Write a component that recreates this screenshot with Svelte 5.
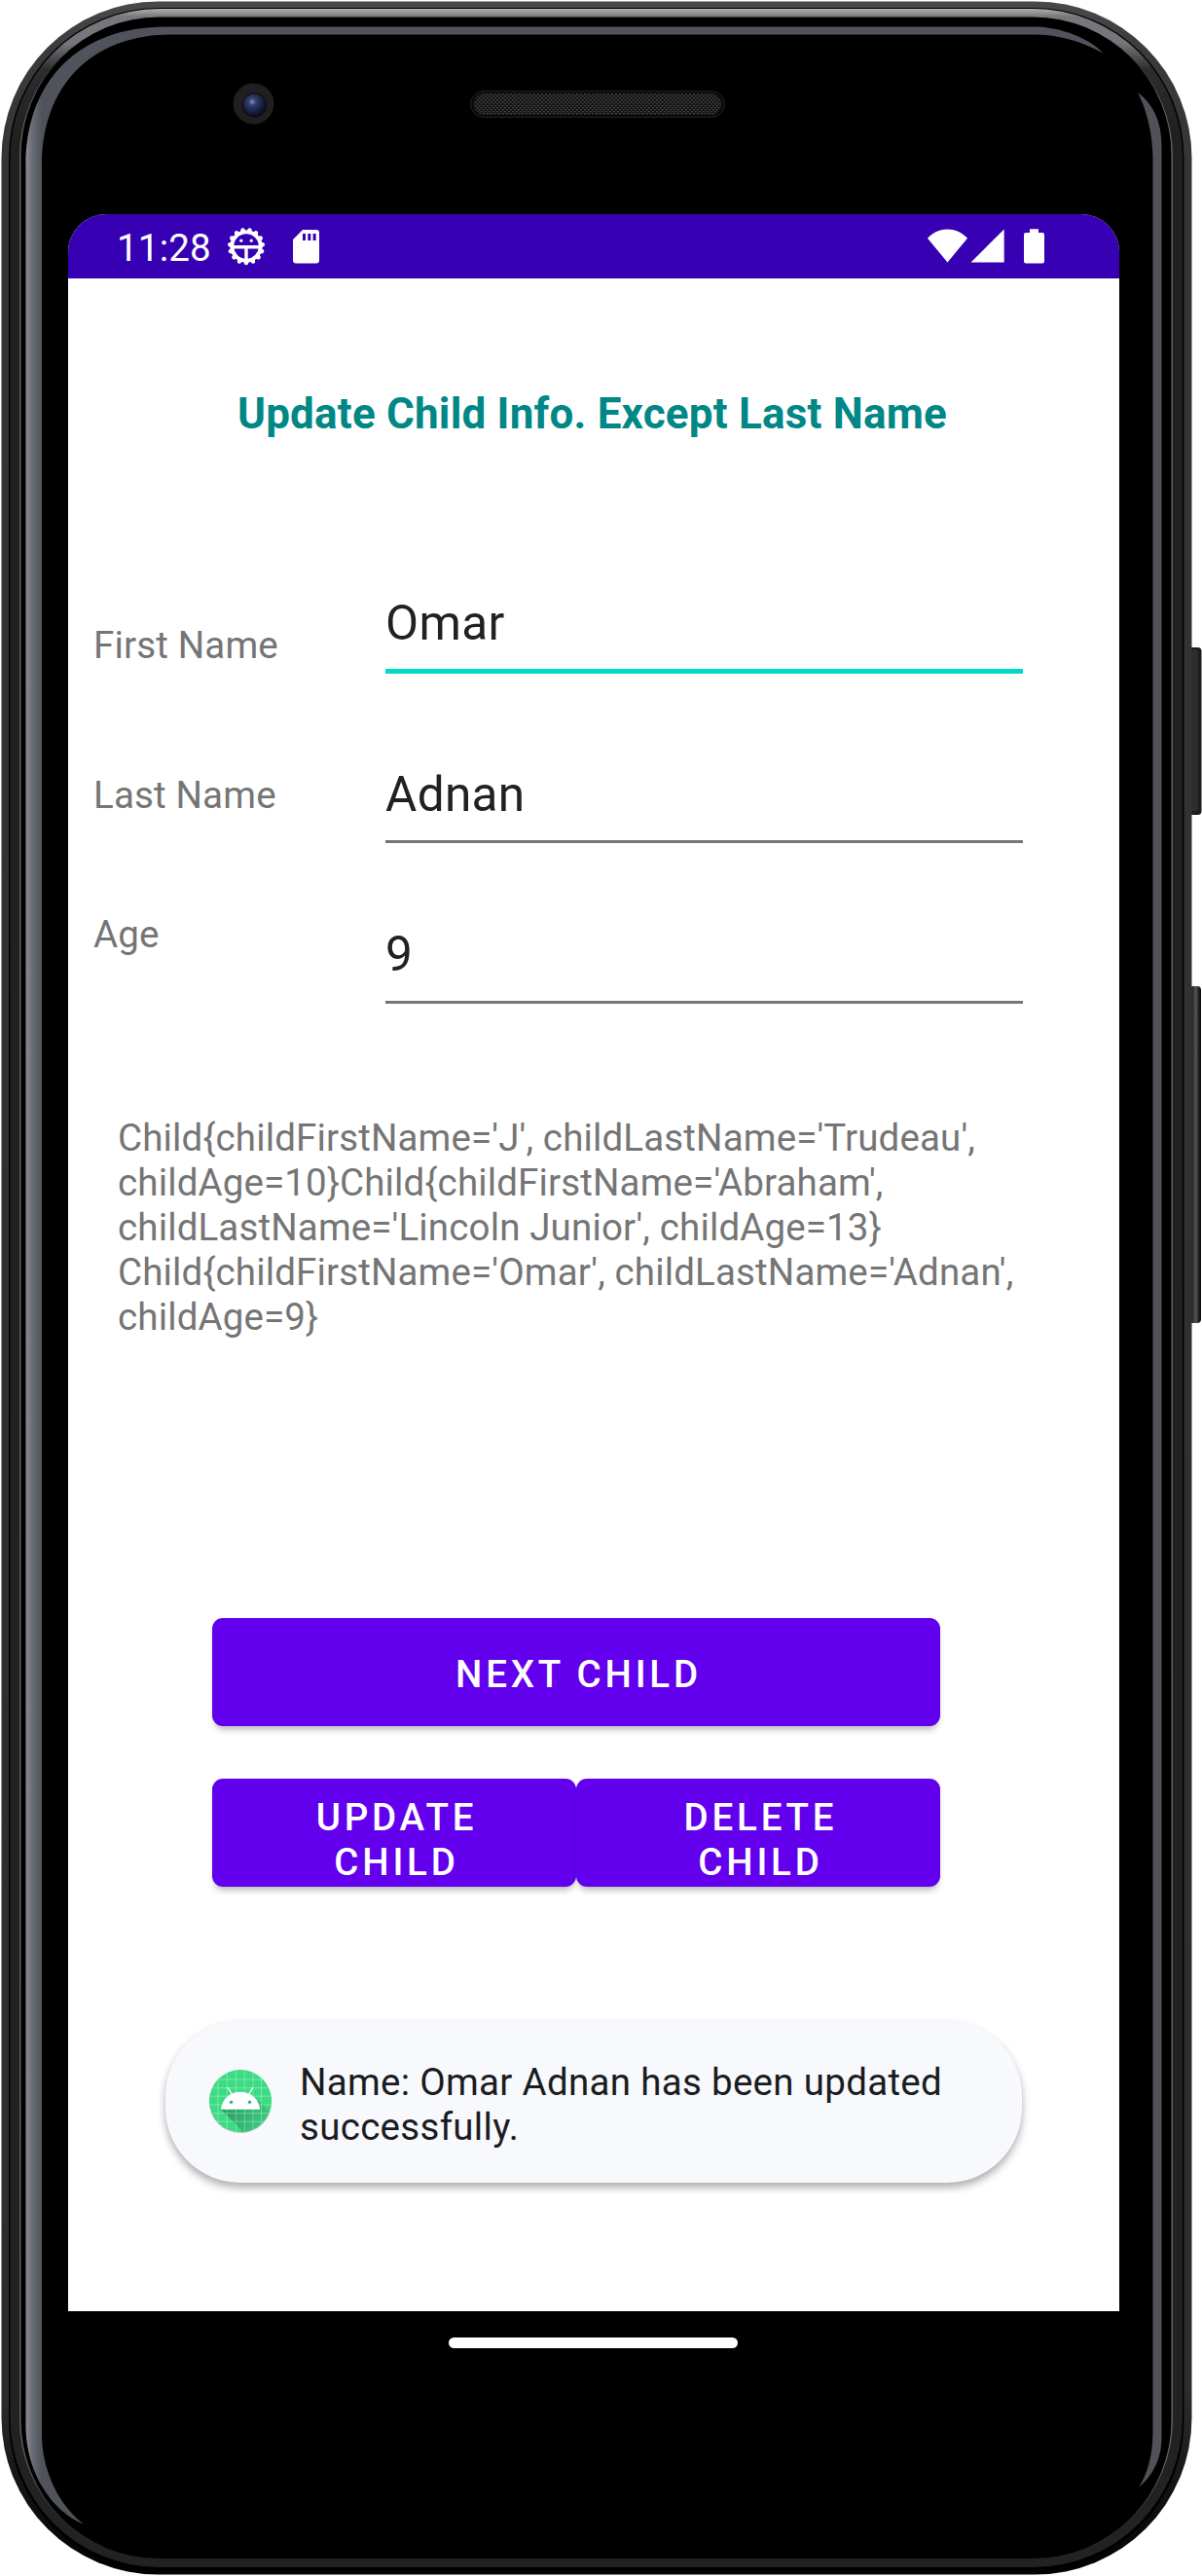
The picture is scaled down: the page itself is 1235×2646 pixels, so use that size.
<script>
  const fields = [
    { id: 'first', label: 'First Name', value: 'Omar', active: true },
    { id: 'last', label: 'Last Name', value: 'Adnan', active: false },
    { id: 'age', label: 'Age', value: '9', active: false },
  ];
  const summary = [
    "Child{childFirstName='J', childLastName='Trudeau',",
    "childAge=10}Child{childFirstName='Abraham',",
    "childLastName='Lincoln Junior', childAge=13}",
    "Child{childFirstName='Omar', childLastName='Adnan',",
    'childAge=9}',
  ];
  const gridX = [9, 18.3, 27.6, 36.3, 45, 53.5];
  const gridY = [10, 18.7, 27.2, 36, 44.7, 53.2];
  const teeth = Array.from({ length: 15 }, (_, i) => i * 24 + 12);
</script>

<div class="device">
  <svg class="shell" viewBox="0 0 1235 2646" width="1235" height="2646" aria-hidden="true">
    <defs>
      <linearGradient id="outer" x1="0" y1="0" x2="0" y2="2646" gradientUnits="userSpaceOnUse">
        <stop offset="0" stop-color="#4a4a4a" /><stop offset=".02" stop-color="#3c3a3a" />
        <stop offset=".06" stop-color="#373435" /><stop offset=".93" stop-color="#2e2b2c" />
        <stop offset=".97" stop-color="#111" /><stop offset="1" stop-color="#000" />
      </linearGradient>
      <linearGradient id="band" x1="0" y1="8" x2="0" y2="2638" gradientUnits="userSpaceOnUse">
        <stop offset="0" stop-color="#b4b5b8" /><stop offset=".0035" stop-color="#77787c" />
        <stop offset=".014" stop-color="#74767b" /><stop offset=".024" stop-color="#2c2d2f" />
        <stop offset=".05" stop-color="#202020" /><stop offset="1" stop-color="#222" />
      </linearGradient>
      <linearGradient id="rim" x1="0" y1="17" x2="0" y2="2628" gradientUnits="userSpaceOnUse">
        <stop offset="0" stop-color="#222" /><stop offset=".03" stop-color="#606162" />
        <stop offset=".96" stop-color="#606162" /><stop offset="1" stop-color="#222" />
      </linearGradient>
      <linearGradient id="leftRing" x1="26" x2="43" y1="0" y2="0" gradientUnits="userSpaceOnUse">
        <stop offset="0" stop-color="#8e9092" /><stop offset=".4" stop-color="#6a6e75" /><stop offset="1" stop-color="#50535b" />
      </linearGradient>
      <linearGradient id="side" x1="0" x2="1" y1="0" y2="0">
        <stop offset="0" stop-color="#111" /><stop offset=".35" stop-color="#2e2e2e" />
        <stop offset=".6" stop-color="#555" /><stop offset=".8" stop-color="#222" /><stop offset="1" stop-color="#080808" />
      </linearGradient>
      <radialGradient id="lens" cx=".4" cy=".35" r=".65">
        <stop offset="0" stop-color="#8590b8" /><stop offset=".25" stop-color="#34406e" />
        <stop offset=".65" stop-color="#1a2348" /><stop offset="1" stop-color="#0b0e1c" />
      </radialGradient>
      <pattern id="mesh" width="4" height="4" patternUnits="userSpaceOnUse">
        <rect width="4" height="4" fill="#131313" />
        <rect width="1.6" height="1.4" fill="#484a48" /><rect x="2" y="2" width="1.6" height="1.4" fill="#484a48" />
      </pattern>
    </defs>
    <rect x="1221" y="665" width="13.5" height="172" rx="4" fill="#1c1c1c" />
    <rect x="1223" y="667" width="8" height="166" rx="3" fill="#2d2d2d" />
    <rect x="1221" y="1013" width="13" height="346" rx="4" fill="url(#side)" />
    <rect x="1.5" y="1.5" width="1223" height="2643" rx="161" fill="url(#outer)" />
    <rect x="9" y="8" width="1207.5" height="2632" rx="154" fill="#000" />
    <rect x="10.5" y="9" width="1204.5" height="2628" rx="153" fill="url(#band)" />
    <rect x="20" y="18" width="1185" height="2610" rx="143" fill="url(#rim)" />
    <rect x="21.5" y="17.5" width="1182" height="2610.5" rx="142" fill="#000" />
    <path fill="url(#leftRing)" d="M26.5 170C26.5 82 82 27.500 170 27.500H1067C1090 29 1118 38 1134 55C1113 43 1088 35.500 1062 35.500H176C94 35.500 43 88 43 170V2504C44 2535 57 2570 86 2593C49 2577 26.500 2535 26.500 2492Z" />
    <path fill="#515258" d="M1169 95C1186 108 1193.500 126 1193.500 150V2505C1193 2527 1184 2543 1170 2555C1181 2537 1184.500 2519 1184.500 2495V165C1184.500 137 1178 113 1169 95Z" />
    <rect x="483.500" y="93.500" width="261" height="27" rx="13.500" fill="#0a0a0c" stroke="#222226" />
    <rect x="487" y="96" width="254" height="22" rx="11" fill="url(#mesh)" />
    <circle cx="260.500" cy="106.500" r="21" fill="#1f1f20" />
    <circle cx="261.500" cy="108" r="12.500" fill="#0b0b10" />
    <circle cx="261.500" cy="108" r="11.500" fill="url(#lens)" />
  </svg>

  <main class="screen">
    <header class="status">
      <span class="clock">11:28</span>
      <svg class="gear" viewBox="-20 -20 40 40" width="40" height="40">
        <circle r="14.700" fill="none" stroke="#fff" stroke-width="3.800" />
        {#each teeth as angle}
          <path d="M-2.900 -15.500L-1.700 -18.500Q0 -20 1.700 -18.500L2.900 -15.500Z" fill="#fff" transform="rotate({angle})" />
        {/each}
        <path d="M-13 .800H13M0 1V15" stroke="#fff" stroke-width="3.400" />
        <circle cx="-5.200" cy="-5.800" r="1.600" fill="#fff" /><circle cx="5.200" cy="-5.800" r="1.600" fill="#fff" />
      </svg>
      <svg class="card" viewBox="0 0 27 35" width="27" height="35">
        <path fill="#fff" fill-rule="evenodd" d="M10 0H24Q27 0 27 3V31.500Q27 34.500 24 34.500H3Q0 34.500 0 31.500V10ZM10 4V11H13V4ZM15.300 4V11H18.300V4ZM20.600 4V11H23.600V4Z" />
      </svg>
      <span class="grow"></span>
      <svg class="signals" viewBox="0 0 120 36" width="120" height="36">
        <path fill="#fff" d="M0 9.700C11.500-2.600 29.500-2.600 41 9.700L20.500 34.500ZM44.500 34.500L78.700.500V34.500ZM105 0.300H114V4H118Q120 4 120 6V33.500Q120 35.500 118 35.500H101Q99 35.500 99 33.500V6Q99 4 101 4H105Z" />
      </svg>
    </header>

    <h1>Update Child Info. Except Last Name</h1>

    <form>
      {#each fields as field}
        <div class="row {field.id}">
          <span class="label">{field.label}</span>
          <div class="input" class:active={field.active}>{field.value}</div>
        </div>
      {/each}
    </form>

    <p class="summary">{#each summary as line}<span>{line}</span>{/each}</p>

    <div class="actions">
      <button class="wide" type="button">NEXT CHILD</button>
      <button type="button">UPDATE<br />CHILD</button>
      <button type="button">DELETE<br />CHILD</button>
    </div>

    <div class="toastArea">
      <div class="toast">
        <svg viewBox="0 0 64 66" width="64" height="66">
          <defs>
            <clipPath id="disc"><circle cx="32" cy="32" r="32" /></clipPath>
            <linearGradient id="cast" x1="14" y1="40" x2="52" y2="60" gradientUnits="userSpaceOnUse">
              <stop offset="0" stop-color="#2a9d63" /><stop offset="1" stop-color="#3bc87c" />
            </linearGradient>
          </defs>
          <circle cx="32" cy="33" r="32" fill="#b9bcbb" />
          <g clip-path="url(#disc)">
            <rect width="64" height="64" fill="#3ddc84" />
            <path d="M12 40.700L36 65H66V46L51 32Z" fill="url(#cast)" />
            <g stroke="#fff" stroke-opacity=".35" stroke-width=".9">
              {#each gridX as x}<path d="M{x} 0V64" />{/each}
              {#each gridY as y}<path d="M0 {y}H64" />{/each}
            </g>
          </g>
          <path d="M19.300 18.300L23.500 25.500M44.700 18.300L40.500 25.500" stroke="#fff" stroke-width="1.300" />
          <path d="M12 40.700C13 30 21.500 22.700 32 22.700S51 30 52 40.700Z" fill="#fff" />
          <circle cx="22.500" cy="33.300" r="1.700" fill="#2fb56d" /><circle cx="41.500" cy="33.300" r="1.700" fill="#2fb56d" />
        </svg>
        <span>Name: Omar Adnan has been updated<br />successfully.</span>
      </div>
    </div>
  </main>
  <div class="pill"></div>
</div>

<style>
  :global(body) { margin: 0; background: #fff; }
  .device {
    position: relative;
    width: 1235px;
    height: 2646px;
    box-sizing: border-box;
    padding: 220px 85px 0 70px;
    overflow: hidden;
    font-family: Roboto, sans-serif;
    font-size: 38.5px;
    line-height: 46px;
  }
  .shell { position: absolute; inset: 0; }
  .screen {
    position: relative;
    width: 1080px;
    height: 2154px;
    background: #fff;
    border-radius: 39px 39px 0 0;
    overflow: hidden;
    display: flex;
    flex-direction: column;
  }
  .status {
    flex: none;
    height: 66px;
    box-sizing: border-box;
    display: flex;
    align-items: center;
    padding: 0 77px 0 50px;
    background: #3700b3;
    color: #fff;
  }
  .clock { width: 113px; padding-top: 3px; letter-spacing: 0.2px; }
  .gear { flex: none; }
  .card { flex: none; margin-left: 28px; }
  .grow { flex: 1; }
  h1 {
    flex: none;
    margin: 109px 0 0;
    padding-right: 3px;
    height: 60px;
    line-height: 60px;
    text-align: center;
    font-size: 44px;
    font-weight: 700;
    letter-spacing: 0.2px;
    color: #018786;
  }
  form { height: 691px; flex: none; padding-top: 120px; box-sizing: border-box; }
  .row { display: flex; padding-left: 26px; height: 174px; }
  .row.last { height: 165px; }
  .label { width: 300px; color: #757575; padding-top: 65px; letter-spacing: 0.16px; }
  .last .label { padding-top: 45px; }
  .age .label { padding-top: 23px; }
  .input {
    box-sizing: border-box;
    width: 655px;
    height: 117px;
    padding-top: 37px;
    font-size: 49.5px;
    line-height: 58px;
    letter-spacing: 0.35px;
    color: #212121;
    border-bottom: 3px solid #757575;
  }
  .last .input { padding-top: 38px; }
  .input.active { padding-top: 36px; border-bottom: 5.500px solid #03dac5; }
  .summary { margin: 0; padding-left: 51px; height: 516px; color: #757575; flex: none; letter-spacing: 0.14px; }
  .summary span { display: block; white-space: nowrap; }
  .actions {
    flex: none;
    margin-left: 148px;
    width: 748px;
    display: grid;
    grid-template-columns: 1fr 1fr;
    row-gap: 54px;
  }
  button {
    height: 111px;
    padding: 15px 0 0 5px;
    border: 0;
    border-radius: 11px;
    background: #6200ee;
    color: #fff;
    font: 500 38.5px/46px Roboto, sans-serif;
    letter-spacing: 3.8px;
    box-shadow: 0 6px 7px -3px rgba(0, 0, 0, .3);
  }
  .wide { grid-column: 1 / 3; padding-top: 5px; }
  .toastArea { flex: none; margin-top: 118px; padding: 20px 90px 11px 100px; overflow: hidden; }
  .toast {
    box-sizing: border-box;
    width: 880px;
    height: 166px;
    padding-left: 45px;
    display: flex;
    align-items: center;
    gap: 29px;
    background: #f8f9fd;
    border-radius: 77px;
    color: #1a1c1e;
    letter-spacing: 0.3px;
    box-shadow: 0 5px 9px rgba(0, 0, 0, .32);
  }
  .toast span { padding-top: 5px; white-space: nowrap; }
  .pill { position: relative; width: 297px; height: 11px; margin: 27px 0 0 391px; border-radius: 6px; background: #fff; }
</style>
